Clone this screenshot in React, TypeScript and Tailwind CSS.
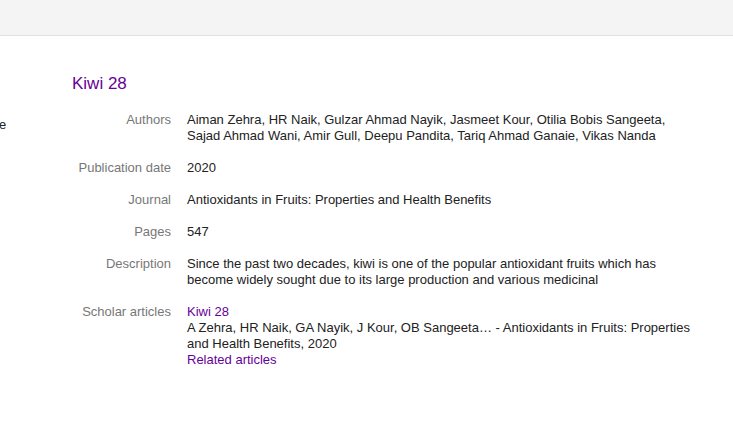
const rows: { label: string; value: React.ReactNode }[] = [
  {
    label: "Authors",
    value:
      "Aiman Zehra, HR Naik, Gulzar Ahmad Nayik, Jasmeet Kour, Otilia Bobis Sangeeta, Sajad Ahmad Wani, Amir Gull, Deepu Pandita, Tariq Ahmad Ganaie, Vikas Nanda",
  },
  { label: "Publication date", value: "2020" },
  { label: "Journal", value: "Antioxidants in Fruits: Properties and Health Benefits" },
  { label: "Pages", value: "547" },
  {
    label: "Description",
    value:
      "Since the past two decades, kiwi is one of the popular antioxidant fruits which has become widely sought due to its large production and various medicinal",
  },
  {
    label: "Scholar articles",
    value: (
      <div>
        <a className="text-[#660099]">Kiwi 28</a>
        <div>
          A Zehra, HR Naik, GA Nayik, J Kour, OB Sangeeta… - Antioxidants in Fruits: Properties and Health Benefits, 2020
        </div>
        <a className="text-[#660099]">Related articles</a>
      </div>
    ),
  },
];

const App = () => {
  return (
    <div className="w-[733px] h-[444px] bg-white overflow-hidden font-['Liberation_Sans',Arial,sans-serif] text-[13px] leading-[16px] text-[#222]">
      <div className="h-[36px] bg-[#f4f4f4] border-b border-[#e0e0e0]"></div>
      <div className="flex">
        <div className="w-[72px] shrink-0 pt-[81px] overflow-hidden">
          <div className="-ml-[1px]">e</div>
        </div>
        <div className="w-[621px]">
          <h1 className="text-[17px] leading-[20px] text-[#660099] mt-[38px] mb-[18px]">Kiwi 28</h1>
          <div className="space-y-[16px]">
            {rows.map((r) => (
              <div key={r.label} className="grid grid-cols-[115px_1fr]">
                <div className="text-right pr-[16px] text-[#777]">{r.label}</div>
                <div>{r.value}</div>
              </div>
            ))}
          </div>
        </div>
      </div>
    </div>
  );
};

export default App;
